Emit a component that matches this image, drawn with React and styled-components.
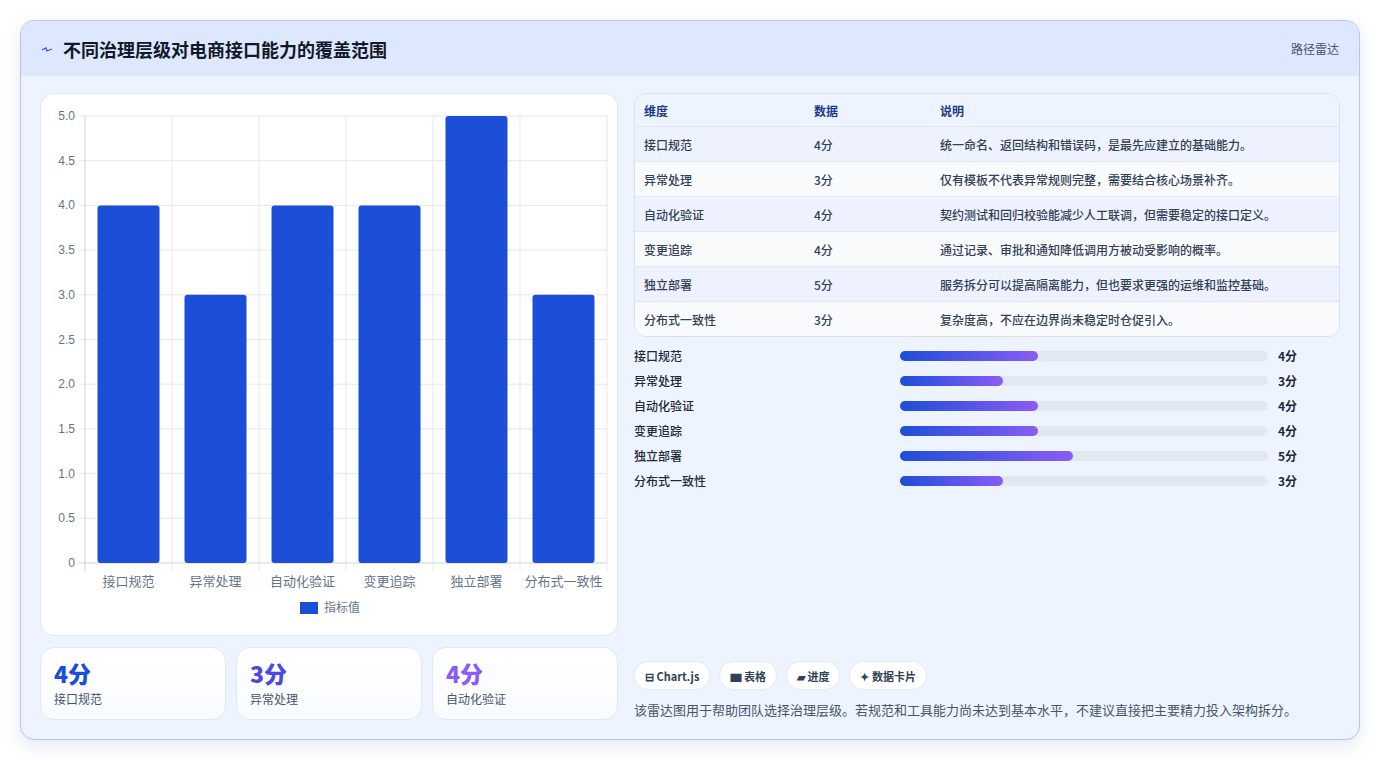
import React from "react";
import styled, { createGlobalStyle } from "styled-components";

const Global = createGlobalStyle`
  body {
    margin: 0;
    background: #ffffff;
    font-family: "Noto Sans CJK SC", "Noto Sans", sans-serif;
  }
`;

const data = [
  { name: "接口规范", value: 4, note: "统一命名、返回结构和错误码，是最先应建立的基础能力。" },
  { name: "异常处理", value: 3, note: "仅有模板不代表异常规则完整，需要结合核心场景补齐。" },
  { name: "自动化验证", value: 4, note: "契约测试和回归校验能减少人工联调，但需要稳定的接口定义。" },
  { name: "变更追踪", value: 4, note: "通过记录、审批和通知降低调用方被动受影响的概率。" },
  { name: "独立部署", value: 5, note: "服务拆分可以提高隔离能力，但也要求更强的运维和监控基础。" },
  { name: "分布式一致性", value: 3, note: "复杂度高，不应在边界尚未稳定时仓促引入。" },
];

const Page = styled.div`
  padding: 20px;
  height: 760px;
  box-sizing: border-box;
`;

const Card = styled.div`
  width: 1340px;
  height: 720px;
  box-sizing: border-box;
  border: 1px solid #b7c3f3;
  border-radius: 14px;
  background: #eef4ff;
  overflow: hidden;
  box-shadow: 0 6px 18px rgba(90, 110, 180, 0.15);
  display: flex;
  flex-direction: column;
`;

const Header = styled.div`
  height: 55px;
  background: #dde7fd;
  display: flex;
  align-items: center;
  justify-content: space-between;
  padding: 0 20px;
`;

const Title = styled.h1`
  margin: 0;
  font-size: 18px;
  font-weight: 700;
  color: #111827;
  display: flex;
  align-items: center;
  gap: 10px;
`;

const Tag = styled.span`
  font-size: 12px;
  color: #475569;
`;

const Body = styled.div`
  flex: 1;
  display: grid;
  grid-template-columns: 578px 706px;
  gap: 16px;
  padding: 17px 19px 16px 19px;
`;

const Column = styled.div`
  display: flex;
  flex-direction: column;
  gap: 11px;
`;

const ChartBox = styled.div`
  height: 543px;
  background: #fff;
  border: 1px solid #e2e8f0;
  border-radius: 14px;
  box-sizing: border-box;
`;

const Stats = styled.div`
  display: grid;
  grid-template-columns: repeat(3, 1fr);
  gap: 10px;
`;

const Stat = styled.div`
  height: 73px;
  box-sizing: border-box;
  background: linear-gradient(180deg, #ffffff, #f8fbff);
  border: 1px solid #e2e8f0;
  border-radius: 14px;
  padding: 10px 13px;
`;

const StatValue = styled.div`
  font-size: 23px;
  font-weight: 800;
  line-height: 30px;
  color: ${(p) => p.$color};
`;

const StatLabel = styled.div`
  font-size: 12px;
  color: #475569;
  margin-top: 2px;
`;

const Table = styled.div`
  border: 1px solid #d9e0ef;
  border-radius: 12px;
  overflow: hidden;
  background: #f8fafc;
`;

const Row = styled.div`
  display: grid;
  grid-template-columns: 170px 126px 1fr;
  align-items: center;
  height: ${(p) => (p.$head ? "32px" : "34px")};
  padding: 0 9px;
  font-size: 12px;
  font-weight: ${(p) => (p.$head ? 700 : 500)};
  color: ${(p) => (p.$head ? "#1e3a8a" : "#334155")};
  background: ${(p) => (p.$head ? "#eef4ff" : p.$odd ? "#eef2ff" : "#f8fafc")};
  border-top: ${(p) => (p.$first ? "none" : "1px solid #e2e8f0")};
`;

const Bars = styled.div`
  display: flex;
  flex-direction: column;
  gap: 8px;
  padding-top: 10px;
`;

const BarRow = styled.div`
  display: grid;
  grid-template-columns: 266px 368px 1fr;
  gap: 0;
  align-items: center;
  height: 17px;
  font-size: 12px;
  font-weight: 500;
  color: #1f2937;
`;

const Track = styled.div`
  height: 10px;
  border-radius: 5px;
  background: #e2e8f0;
  margin-right: 10px;
  width: 368px;
`;

const Fill = styled.div`
  height: 100%;
  border-radius: 5px;
  background: linear-gradient(90deg, #1d4ed8, #8b5cf6);
`;

const Score = styled.span`
  font-weight: 700;
  padding-left: 10px;
  color: #1f2937;
`;

const Spacer = styled.div`
  flex: 1;
`;

const Chips = styled.div`
  display: flex;
  gap: 9px;
`;

const Chip = styled.span`
  height: 27px;
  padding: 0 10px;
  display: inline-flex;
  align-items: center;
  gap: 4px;
  border-radius: 14px;
  background: #fff;
  border: 1px solid #e5e9f2;
  font-size: 11px;
  font-weight: 700;
  color: #334155;
`;

const Foot = styled.p`
  margin: 10px 0 4px;
  font-size: 13px;
  color: #475569;
`;

function Chart() {
  const x0 = 44, x1 = 566, y0 = 469, yTop = 22;
  const h = y0 - yTop;
  const w = (x1 - x0) / 6;
  const ticks = [0, 0.5, 1, 1.5, 2, 2.5, 3, 3.5, 4, 4.5, 5];
  return (
    <svg width="578" height="543">
      {ticks.map((t) => {
        const y = y0 - (t / 5) * h;
        return (
          <g key={t}>
            <line x1={x0 - 6} x2={x1} y1={y} y2={y} stroke={t === 0 ? "#cbd5e1" : "#e5e7eb"} />
            <text x={x0 - 10} y={y + 4} textAnchor="end" fontSize="12" fill="#64748b" fontFamily="Liberation Sans">
              {t === 0 ? "0" : t.toFixed(1)}
            </text>
          </g>
        );
      })}
      {[0, 1, 2, 3, 4, 5, 6].map((i) => (
        <line key={i} x1={x0 + i * w} x2={x0 + i * w} y1={yTop} y2={y0 + 8} stroke={i === 0 ? "#cbd5e1" : "#e5e7eb"} />
      ))}
      {data.map((d, i) => {
        const bh = (d.value / 5) * h;
        return (
          <g key={d.name}>
            <rect x={x0 + i * w + 12.5} y={y0 - bh} width={w - 25} height={bh} rx="3" fill="#1d4ed8" />
            <text x={x0 + i * w + w / 2} y={y0 + 23} textAnchor="middle" fontSize="13" fill="#64748b">
              {d.name}
            </text>
          </g>
        );
      })}
      <rect x="259" y="508" width="18" height="12" fill="#1d4ed8" />
      <text x="283" y="518" fontSize="12" fill="#64748b">指标值</text>
    </svg>
  );
}

export default function App() {
  return (
    <Page>
      <Global />
      <Card>
        <Header>
          <Title>
            <svg width="12" height="10" viewBox="0 0 12 10">
              <path d="M1 6 L5 4 L6 7 L11 5" stroke="#2563eb" strokeWidth="1.3" fill="none" />
            </svg>
            不同治理层级对电商接口能力的覆盖范围
          </Title>
          <Tag>路径雷达</Tag>
        </Header>
        <Body>
          <Column>
            <ChartBox>
              <Chart />
            </ChartBox>
            <Stats>
              <Stat>
                <StatValue $color="#1d4ed8">4分</StatValue>
                <StatLabel>接口规范</StatLabel>
              </Stat>
              <Stat>
                <StatValue $color="#4f46e5">3分</StatValue>
                <StatLabel>异常处理</StatLabel>
              </Stat>
              <Stat>
                <StatValue $color="#8b5cf6">4分</StatValue>
                <StatLabel>自动化验证</StatLabel>
              </Stat>
            </Stats>
          </Column>
          <Column style={{ gap: 0 }}>
            <Table>
              <Row $head $first>
                <span>维度</span>
                <span>数据</span>
                <span>说明</span>
              </Row>
              {data.map((d, i) => (
                <Row key={d.name} $odd={i % 2 === 0}>
                  <span>{d.name}</span>
                  <span>{d.value}分</span>
                  <span>{d.note}</span>
                </Row>
              ))}
            </Table>
            <Bars>
              {data.map((d) => (
                <BarRow key={d.name}>
                  <span>{d.name}</span>
                  <Track>
                    <Fill style={{ width: `${(d.value * 35 - 2) / 3.68}%` }} />
                  </Track>
                  <Score>{d.value}分</Score>
                </BarRow>
              ))}
            </Bars>
            <Spacer />
            <Chips>
              <Chip>⊟ Chart.js</Chip>
              <Chip>▆ 表格</Chip>
              <Chip>▰ 进度</Chip>
              <Chip>✦ 数据卡片</Chip>
            </Chips>
            <Foot>该雷达图用于帮助团队选择治理层级。若规范和工具能力尚未达到基本水平，不建议直接把主要精力投入架构拆分。</Foot>
          </Column>
        </Body>
      </Card>
    </Page>
  );
}
